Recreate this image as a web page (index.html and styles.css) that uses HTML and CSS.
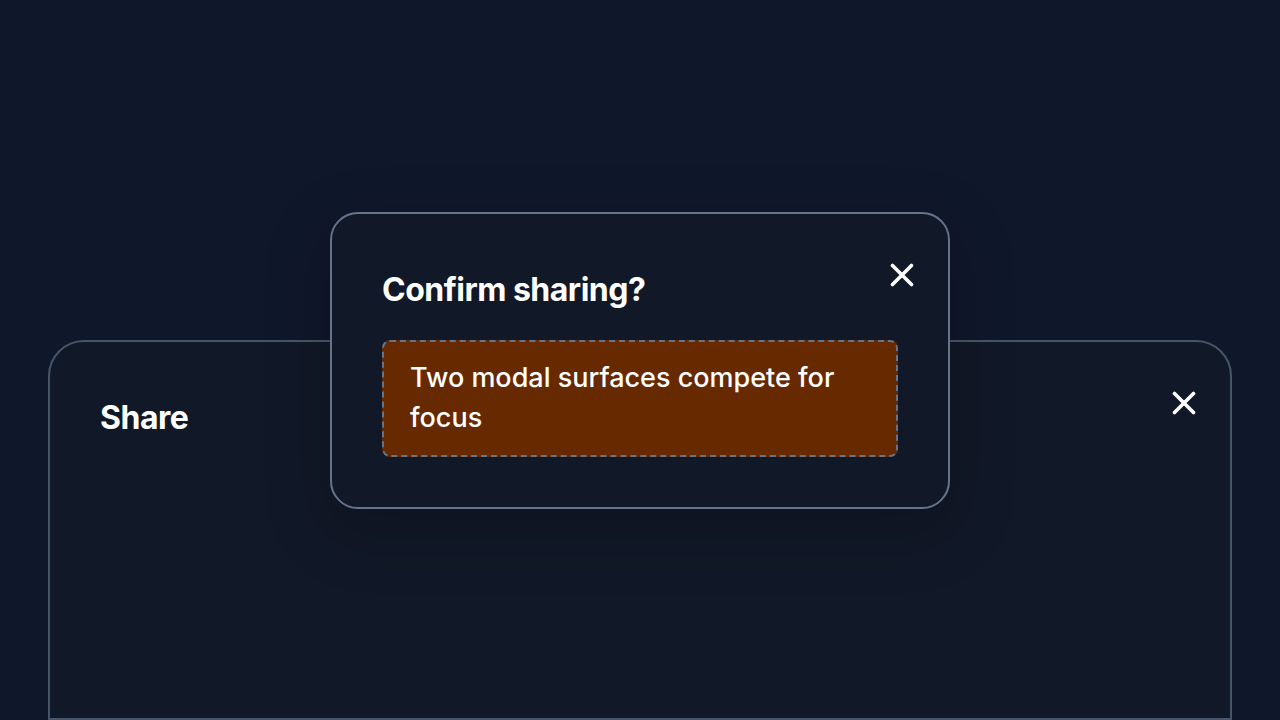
FILE: index.html
```html
<!DOCTYPE html>
<html>
<head>
    <title>Share</title>
    <link rel="stylesheet" href="styles.css">
</head>
<body>
<div class="stage">
    <div class="modal modal-back">
        <div class="modal-header">
            <h2 class="modal-title">Share</h2>
            <button class="close-btn" aria-label="Close">
                <svg width="24" height="24" viewBox="0 0 24 24"><path d="M2.5 2.5L21.5 21.5M21.5 2.5L2.5 21.5" /></svg>
            </button>
        </div>
    </div>

    <!-- confirm dialog sits over the share sheet -->
    <div class="modal modal-front">
        <div class="modal-header">
            <h2 class="modal-title">Confirm sharing?</h2>
            <button class="close-btn" aria-label="Close">
                <svg width="24" height="24" viewBox="0 0 24 24"><path d="M2.5 2.5L21.5 21.5M21.5 2.5L2.5 21.5" /></svg>
            </button>
        </div>
        <div class="warning">Two modal surfaces compete for focus</div>
    </div>
</div>
</body>
</html>
```

FILE: styles.css
```css
body {
    background-color: #0f172a;
    font-family: Inter, "Noto Sans", sans-serif;
    color: #ffffff;
    margin: 0;
    padding: 0;
    overflow: hidden;
}
.stage {
    position: relative;
    height: 720px;
    padding: 340px 48px 0;
    box-sizing: border-box;
}
.modal {
    background-color: #111827;
    box-sizing: border-box;
    padding: 54px 50px 50px;
}
.modal-back {
    height: 380px;
    border: 2px solid #475569;
    border-radius: 36px 36px 0 0;
}
.modal-front {
    position: absolute;
    top: 212px;
    left: 330px;
    width: 620px;
    border: 2px solid #64748b;
    border-radius: 28px;
    box-shadow: 0 20px 60px 10px rgba(0, 0, 0, 0.16);
}
.modal-header {
    display: flex;
    justify-content: space-between;
    align-items: flex-start;
}
.modal-title {
    margin: 2px 0 -2px;
    font-size: 32px;
    line-height: 40px;
    font-weight: 700;
    letter-spacing: -0.5px;
}
.close-btn {
    background: none;
    border: none;
    padding: 0;
    width: 24px;
    height: 24px;
    margin: -5px -16px 0 0;
    cursor: pointer;
}
.close-btn svg {
    display: block;
}
.close-btn path {
    stroke: #ffffff;
    stroke-width: 3.6;
    stroke-linecap: round;
    fill: none;
}
.warning {
    margin-top: 32px;
    background-color: #662900;
    border: 2px dashed #64748b;
    border-radius: 8px;
    padding: 16px 26px 17px;
    font-size: 27px;
    line-height: 40px;
    font-weight: 500;
}
```
